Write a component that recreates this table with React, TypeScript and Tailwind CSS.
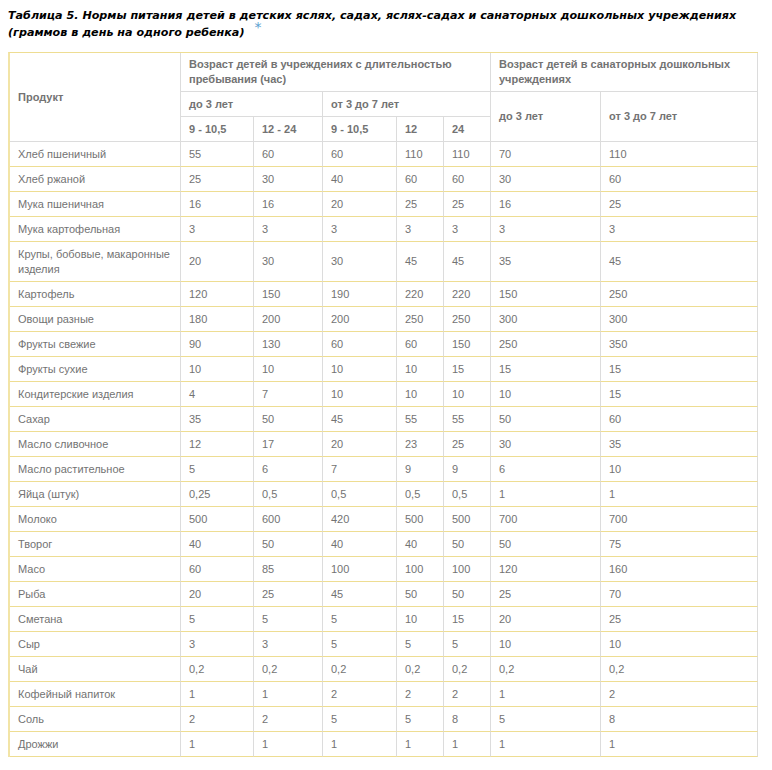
const rows: [string, string[], boolean?][] = [
  ["Хлеб пшеничный", ["55", "60", "60", "110", "110", "70", "110"]],
  ["Хлеб ржаной", ["25", "30", "40", "60", "60", "30", "60"]],
  ["Мука пшеничная", ["16", "16", "20", "25", "25", "16", "25"]],
  ["Мука картофельная", ["3", "3", "3", "3", "3", "3", "3"]],
  ["Крупы, бобовые, макаронные изделия", ["20", "30", "30", "45", "45", "35", "45"], true],
  ["Картофель", ["120", "150", "190", "220", "220", "150", "250"]],
  ["Овощи разные", ["180", "200", "200", "250", "250", "300", "300"]],
  ["Фрукты свежие", ["90", "130", "60", "60", "150", "250", "350"]],
  ["Фрукты сухие", ["10", "10", "10", "10", "15", "15", "15"]],
  ["Кондитерские изделия", ["4", "7", "10", "10", "10", "10", "15"]],
  ["Сахар", ["35", "50", "45", "55", "55", "50", "60"]],
  ["Масло сливочное", ["12", "17", "20", "23", "25", "30", "35"]],
  ["Масло растительное", ["5", "6", "7", "9", "9", "6", "10"]],
  ["Яйца (штук)", ["0,25", "0,5", "0,5", "0,5", "0,5", "1", "1"]],
  ["Молоко", ["500", "600", "420", "500", "500", "700", "700"]],
  ["Творог", ["40", "50", "40", "40", "50", "50", "75"]],
  ["Масо", ["60", "85", "100", "100", "100", "120", "160"]],
  ["Рыба", ["20", "25", "45", "50", "50", "25", "70"]],
  ["Сметана", ["5", "5", "5", "10", "15", "20", "25"]],
  ["Сыр", ["3", "3", "5", "5", "5", "10", "10"]],
  ["Чай", ["0,2", "0,2", "0,2", "0,2", "0,2", "0,2", "0,2"]],
  ["Кофейный напиток", ["1", "1", "2", "2", "2", "1", "2"]],
  ["Соль", ["2", "2", "5", "5", "8", "5", "8"]],
  ["Дрожжи", ["1", "1", "1", "1", "1", "1", "1"]],
];

// header cells: gray grid lines
const th = "border-r border-b border-[#dcdcdc] px-2 text-left align-middle font-bold leading-[15px]";
// body cells: gray columns, yellow row lines
const td = "border-r border-b border-r-[#dcdcdc] border-b-[#eedd92] px-2 align-middle leading-[15px]";

export default function App() {
  return (
    <div className="bg-white p-2 font-['Liberation_Sans',Arial,sans-serif] text-[11px] text-[#737373]">
      <h1 className="h-8 whitespace-nowrap font-['DejaVu_Sans',Verdana,sans-serif] text-[11.15px] font-bold italic leading-4 text-black">
        Таблица 5. Нормы питания детей в детских яслях, садах, яслях-садах и санаторных дошкольных учреждениях
        <br />
        (граммов в день на одного ребенка)
        <span className="relative -top-[4px] ml-[10px] text-[14px] leading-none font-normal not-italic text-[#5a9fd0]">*</span>
      </h1>

      <table className="mt-3 w-[748px] table-fixed border-separate border-spacing-0 border-t border-l-2 border-t-[#eedd92] border-l-[#f2e4a6]">
        <colgroup>
          <col className="w-[171px]" />
          <col className="w-[73px]" />
          <col className="w-[69px]" />
          <col className="w-[74px]" />
          <col className="w-[47px]" />
          <col className="w-[47px]" />
          <col className="w-[110px]" />
          <col className="w-[157px]" />
        </colgroup>
        <thead>
          <tr className="h-[39px]">
            <th rowSpan={3} className={th}>Продукт</th>
            <th colSpan={5} className={th}>Возраст детей в учреждениях с длительностью пребывания (час)</th>
            <th colSpan={2} className={th}>Возраст детей в санаторных дошкольных учреждениях</th>
          </tr>
          <tr className="h-[25px]">
            <th colSpan={2} className={th}>до 3 лет</th>
            <th colSpan={3} className={th}>от 3 до 7 лет</th>
            <th rowSpan={2} className={th}>до 3 лет</th>
            <th rowSpan={2} className={th}>от 3 до 7 лет</th>
          </tr>
          <tr className="h-[25px]">
            <th className={th}>9 - 10,5</th>
            <th className={th}>12 - 24</th>
            <th className={th}>9 - 10,5</th>
            <th className={th}>12</th>
            <th className={th}>24</th>
          </tr>
        </thead>
        <tbody>
          {rows.map(([name, vals, tall]) => (
            <tr key={name} className={tall ? "h-[40px]" : "h-[25px]"}>
              <td className={td}>{name}</td>
              {vals.map((v, i) => (
                <td key={i} className={td}>{v}</td>
              ))}
            </tr>
          ))}
        </tbody>
      </table>
    </div>
  );
}
